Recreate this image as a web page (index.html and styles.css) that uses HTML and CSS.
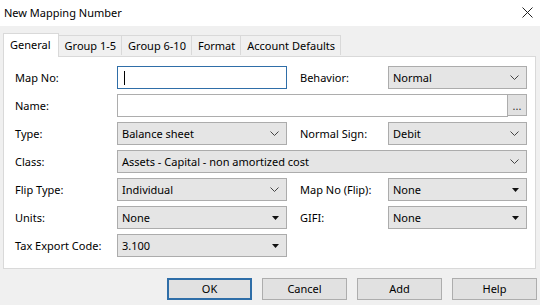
FILE: index.html
```html
<!DOCTYPE html>
<html>
<head>
<meta charset="utf-8">
<title>New Mapping Number</title>
<link rel="stylesheet" href="styles.css">
</head>
<body>
<div class="window">
  <div class="titlebar">
    <span class="title">New Mapping Number</span>
    <svg class="close" width="11" height="11" viewBox="0 0 11 11"><path d="M0.5 0.5 L10.5 10.5 M10.5 0.5 L0.5 10.5" stroke="#222" stroke-width="1" fill="none"/></svg>
  </div>
  <div class="tabs">
    <div class="tab active">General</div>
    <div class="tab">Group 1-5</div>
    <div class="tab">Group 6-10</div>
    <div class="tab">Format</div>
    <div class="tab">Account Defaults</div>
  </div>
  <div class="panel">
    <div class="form">
      <div class="label">Map No:</div>
      <div class="input focused"><span class="caret"></span></div>
      <div class="label label2">Behavior:</div>
      <div class="combo">Normal<svg class="chev" width="9" height="5" viewBox="0 0 9 5"><path d="M0.5 0.5 L4.5 4.5 L8.5 0.5" stroke="#444" fill="none"/></svg></div>

      <div class="label">Name:</div>
      <div class="namewrap"><div class="input grow"></div><div class="dots">...</div></div>

      <div class="label">Type:</div>
      <div class="combo">Balance sheet<svg class="chev" width="9" height="5" viewBox="0 0 9 5"><path d="M0.5 0.5 L4.5 4.5 L8.5 0.5" stroke="#444" fill="none"/></svg></div>
      <div class="label label2">Normal Sign:</div>
      <div class="combo">Debit<svg class="chev" width="9" height="5" viewBox="0 0 9 5"><path d="M0.5 0.5 L4.5 4.5 L8.5 0.5" stroke="#444" fill="none"/></svg></div>

      <div class="label">Class:</div>
      <div class="combo wide">Assets - Capital - non amortized cost<svg class="chev" width="9" height="5" viewBox="0 0 9 5"><path d="M0.5 0.5 L4.5 4.5 L8.5 0.5" stroke="#444" fill="none"/></svg></div>

      <div class="label">Flip Type:</div>
      <div class="combo">Individual<svg class="chev" width="9" height="5" viewBox="0 0 9 5"><path d="M0.5 0.5 L4.5 4.5 L8.5 0.5" stroke="#444" fill="none"/></svg></div>
      <div class="label label2">Map No (Flip):</div>
      <div class="combo">None<svg class="tri" width="7" height="4" viewBox="0 0 7 4"><path d="M0 0 L7 0 L3.5 4 Z" fill="#111"/></svg></div>

      <div class="label">Units:</div>
      <div class="combo">None<svg class="tri" width="7" height="4" viewBox="0 0 7 4"><path d="M0 0 L7 0 L3.5 4 Z" fill="#111"/></svg></div>
      <div class="label label2">GIFI:</div>
      <div class="combo">None<svg class="tri" width="7" height="4" viewBox="0 0 7 4"><path d="M0 0 L7 0 L3.5 4 Z" fill="#111"/></svg></div>

      <div class="label">Tax Export Code:</div>
      <div class="combo">3.100<svg class="tri" width="7" height="4" viewBox="0 0 7 4"><path d="M0 0 L7 0 L3.5 4 Z" fill="#111"/></svg></div>
    </div>
  </div>
  <div class="buttons">
    <div class="btn default">OK</div>
    <div class="btn">Cancel</div>
    <div class="btn">Add</div>
    <div class="btn">Help</div>
  </div>
</div>
</body>
</html>
```
FILE: styles.css
```css
html, body {
  margin: 0;
  padding: 0;
}
body {
  width: 540px;
  height: 305px;
  background: #f0f0f0;
  font-family: "Noto Sans", "Segoe UI", sans-serif;
  font-size: 11px;
  color: #000;
  overflow: hidden;
}
.window {
  display: flex;
  flex-direction: column;
  height: 305px;
}
.titlebar {
  height: 26px;
  background: #ffffff;
  display: flex;
  align-items: center;
  justify-content: space-between;
  padding: 0 7px 2px 4px;
  box-sizing: border-box;
}
.title {
  font-size: 11px;
  color: #000;
}
.close {
  display: block;
}
.tabs {
  display: flex;
  align-items: flex-end;
  margin-top: 7px;
  padding-left: 3px;
  height: 23px;
  position: relative;
  z-index: 1;
}
.tab {
  height: 20px;
  line-height: 19px;
  padding: 0 5px 0 6px;
  background: #f0f0f0;
  border: 1px solid #d9d9d9;
  border-bottom: none;
  border-left: none;
  box-sizing: border-box;
  margin-bottom: 1px;
}
.tab:nth-child(2) {
  border-left: 1px solid #d9d9d9;
}
.tab.active {
  height: 24px;
  line-height: 22px;
  background: #ffffff;
  border-left: 1px solid #d9d9d9;
  margin-bottom: -1px;
  padding: 0 7px 0 6px;
}
.tab.active + .tab {
  border-left: none;
}
.panel {
  margin: 0 4px 0 3px;
  height: 213px;
  background: #ffffff;
  border: 1px solid #d9d9d9;
  box-sizing: border-box;
  padding: 9px 0 0 11px;
}
.form {
  display: grid;
  grid-template-columns: 102px 170px 101px 139px;
  grid-auto-rows: 23px;
  row-gap: 5px;
}
.label {
  display: flex;
  align-items: center;
  white-space: nowrap;
}
.label2 {
  padding-left: 13px;
}
.input {
  background: #ffffff;
  border: 1px solid #adadad;
  box-sizing: border-box;
  display: flex;
  align-items: center;
  padding-left: 6px;
}
.input.focused {
  border-color: #2f6ea8;
}
.caret {
  width: 1px;
  height: 14px;
  background: #000;
}
.namewrap {
  grid-column: 2 / 5;
  display: flex;
}
.input.grow {
  flex: 1;
}
.dots {
  width: 19px;
  background: #e1e1e1;
  border: 1px solid #adadad;
  border-left: none;
  box-sizing: border-box;
  font-size: 11px;
  line-height: 21px;
  text-align: center;
  color: #333;
  height: 22px;
}
.combo {
  background: #e5e5e5;
  border: 1px solid #acacac;
  box-sizing: border-box;
  display: flex;
  align-items: center;
  justify-content: space-between;
  padding: 0 7px 0 4px;
  white-space: nowrap;
}
.combo.wide {
  grid-column: 2 / 5;
}
.chev, .tri {
  display: block;
  flex: none;
}
.buttons {
  display: flex;
  justify-content: flex-end;
  gap: 10px;
  margin-top: 9px;
  padding-right: 3px;
}
.btn {
  width: 85px;
  height: 22px;
  box-sizing: border-box;
  background: #e1e1e1;
  border: 1px solid #adadad;
  text-align: center;
  line-height: 20px;
}
.btn.default {
  border: 2px solid #2f6ea8;
  line-height: 18px;
}
```
